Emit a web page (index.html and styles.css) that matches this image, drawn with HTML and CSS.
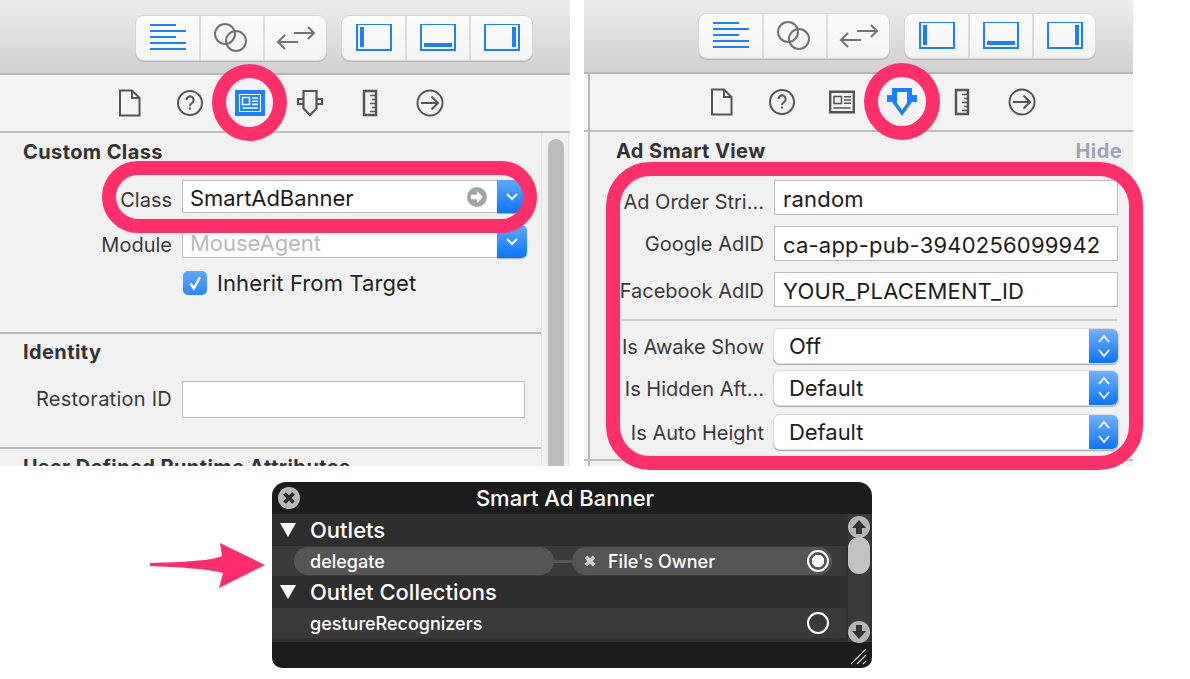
FILE: index.html
```html
<!DOCTYPE html>
<html lang="en">
<head>
<meta charset="utf-8">
<title>Smart Ad Banner</title>
<link rel="stylesheet" href="styles.css">
</head>
<body>
<svg class="defs" width="0" height="0" aria-hidden="true">
  <symbol id="i-lines" viewBox="0 0 36 28"><path d="M0 1h26M0 7h36M0 13h26M0 19h36M0 25h36" fill="none" stroke="currentColor" stroke-width="2"/></symbol>
  <symbol id="i-rings" viewBox="0 0 36 32"><g fill="none" stroke="currentColor" stroke-width="2"><circle cx="11" cy="12" r="10"/><circle cx="22" cy="19" r="10"/></g></symbol>
  <symbol id="i-swap" viewBox="0 0 40 24"><path d="M16 8H36M30 2l6 6-6 6M0 17H20M7 10l-7 7 7 7" transform="translate(2 -1)" fill="none" stroke="currentColor" stroke-width="2"/></symbol>
  <symbol id="i-pleft" viewBox="0 1 36 28"><rect x="1" y="1" width="34" height="26" fill="none" stroke="currentColor" stroke-width="2"/><rect x="4" y="4" width="4" height="20" fill="currentColor"/></symbol>
  <symbol id="i-pbottom" viewBox="0 1 36 28"><rect x="1" y="1" width="34" height="26" fill="none" stroke="currentColor" stroke-width="2"/><rect x="4" y="20" width="28" height="4" fill="currentColor"/></symbol>
  <symbol id="i-pright" viewBox="0 1 36 28"><rect x="1" y="1" width="34" height="26" fill="none" stroke="currentColor" stroke-width="2"/><rect x="28" y="4" width="4" height="20" fill="currentColor"/></symbol>
  <symbol id="i-doc" viewBox="0 0 36 36"><path d="M8 5.500H20L27.500 13V30.500H8ZM20 5.500V13H27.500" fill="none" stroke="currentColor" stroke-width="2"/></symbol>
  <symbol id="i-help" viewBox="0 0 36 36"><circle cx="18" cy="18" r="12" fill="none" stroke="currentColor" stroke-width="2"/><path d="M14.500 15a3.600 3.600 0 1 1 5.600 3c-1.500 1-2.100 1.600-2.100 3" fill="none" stroke="currentColor" stroke-width="2"/><rect x="17" y="22.500" width="2" height="2" fill="currentColor"/></symbol>
  <symbol id="i-id" viewBox="0 0 36 36"><path d="M6.200 7.700h23.600v20.600H6.200z" fill="none" stroke="currentColor" stroke-width="2.400"/><path d="M10 12.500h7.500v7H10zM20 12.800h7M20 16h7M20 19.200h7M9.500 24h17" fill="none" stroke="currentColor" stroke-width="1.500"/></symbol>
  <symbol id="i-id-on" viewBox="0 0 36 36"><rect x="3" y="5" width="30" height="26" fill="currentColor"/><path d="M7.500 9.500h21v17h-21z" fill="none" stroke="#fff" stroke-width="1.200"/><path d="M10.500 12.500h7v7h-7zM20 13h6M20 16.200h6M20 19.400h6M10.500 23h15.500" fill="none" stroke="#fff" stroke-width="1.600"/></symbol>
  <symbol id="i-attr" viewBox="0 0 36 36"><path d="M11.500 6H24.500V23.500L18 30 11.500 23.500ZM11.500 14H6V19H11.500M24.500 14H30V19H24.500" fill="none" stroke="currentColor" stroke-width="2.200"/></symbol>
  <symbol id="i-attr-on" viewBox="0 0 36 36"><path d="M8 4H28V11H33V18H28L18 32 8 18H3V11H8Z" fill="currentColor"/><path d="M13 8H23V19L18 26 13 19Z" fill="#f3f3f3"/></symbol>
  <symbol id="i-ruler" viewBox="0 0 36 36"><path d="M12 6h12v24H12z" fill="none" stroke="currentColor" stroke-width="2.500"/><path d="M18 10.500h6M20 14.500h4M18 18.500h6M20 22.500h4M18 26.500h6" fill="none" stroke="currentColor" stroke-width="1.600"/></symbol>
  <symbol id="i-next" viewBox="0 0 36 36"><circle cx="18" cy="18" r="12.500" fill="none" stroke="currentColor" stroke-width="2"/><path d="M9 18h17M19.500 11.500L26 18l-6.500 6.500" fill="none" stroke="currentColor" stroke-width="2"/></symbol>
  <symbol id="i-down" viewBox="0 0 16 10"><path d="M3 2l5 5 5-5" fill="none" stroke="currentColor" stroke-width="2"/></symbol>
  <symbol id="i-updown" viewBox="0 0 16 28"><path d="M3 10l5-6 5 6M3 18l5 6 5-6" fill="none" stroke="currentColor" stroke-width="1.800"/></symbol>
  <symbol id="i-go" viewBox="0 0 20 20"><circle cx="10" cy="10" r="10" fill="#a3a3a3"/><path d="M4 7.800h6V4l6 6-6 6v-3.800H4z" fill="#fff"/></symbol>
  <symbol id="i-check" viewBox="0 0 24 24"><path d="M7.500 12.500l3.300 5 6-11" fill="none" stroke="#fff" stroke-width="2.400"/></symbol>
</svg>

<main class="stage">
  <section class="inspector inspector-left">
    <header class="toolbar">
      <div class="seg">
        <span class="seg-cell blue"><svg class="ic-36"><use href="#i-lines"/></svg></span>
        <span class="seg-cell grey"><svg class="ic-36b"><use href="#i-rings"/></svg></span>
        <span class="seg-cell grey"><svg class="ic-40"><use href="#i-swap"/></svg></span>
      </div>
      <div class="seg">
        <span class="seg-cell blue"><svg class="ic-36"><use href="#i-pleft"/></svg></span>
        <span class="seg-cell blue"><svg class="ic-36"><use href="#i-pbottom"/></svg></span>
        <span class="seg-cell blue"><svg class="ic-36"><use href="#i-pright"/></svg></span>
      </div>
    </header>
    <nav class="tabs">
      <span class="tab"><svg class="tab-ic"><use href="#i-doc"/></svg></span>
      <span class="tab"><svg class="tab-ic"><use href="#i-help"/></svg></span>
      <span class="tab on"><svg class="tab-ic"><use href="#i-id-on"/></svg></span>
      <span class="tab"><svg class="tab-ic"><use href="#i-attr"/></svg></span>
      <span class="tab"><svg class="tab-ic"><use href="#i-ruler"/></svg></span>
      <span class="tab"><svg class="tab-ic"><use href="#i-next"/></svg></span>
    </nav>
    <div class="body">
      <div class="sections">
        <section class="sec sec-class">
          <h2 class="sec-title">Custom Class</h2>
          <div class="row row-class">
            <span class="lab">Class</span>
            <div class="combo"><span class="val">SmartAdBanner</span><svg class="go"><use href="#i-go"/></svg><span class="drop"><svg class="drop-ic"><use href="#i-down"/></svg></span></div>
          </div>
          <div class="row row-module">
            <span class="lab">Module</span>
            <div class="combo"><span class="val muted">MouseAgent</span><span class="drop"><svg class="drop-ic"><use href="#i-down"/></svg></span></div>
          </div>
          <div class="row row-check">
            <span class="lab"></span>
            <div class="check"><span class="box"><svg class="box-ic"><use href="#i-check"/></svg></span><span class="check-text">Inherit From Target</span></div>
          </div>
        </section>
        <section class="sec sec-identity">
          <h2 class="sec-title">Identity</h2>
          <div class="row row-rest">
            <span class="lab">Restoration ID</span>
            <div class="field field-rest"></div>
          </div>
        </section>
        <section class="sec sec-user">
          <h2 class="sec-title">User Defined Runtime Attributes</h2>
        </section>
      </div>
      <div class="scroll"><span class="thumb"></span></div>
    </div>
  </section>

  <section class="inspector inspector-right">
    <span class="edge"></span>
    <header class="toolbar">
      <div class="seg">
        <span class="seg-cell blue"><svg class="ic-36"><use href="#i-lines"/></svg></span>
        <span class="seg-cell grey"><svg class="ic-36b"><use href="#i-rings"/></svg></span>
        <span class="seg-cell grey"><svg class="ic-40"><use href="#i-swap"/></svg></span>
      </div>
      <div class="seg">
        <span class="seg-cell blue"><svg class="ic-36"><use href="#i-pleft"/></svg></span>
        <span class="seg-cell blue"><svg class="ic-36"><use href="#i-pbottom"/></svg></span>
        <span class="seg-cell blue"><svg class="ic-36"><use href="#i-pright"/></svg></span>
      </div>
    </header>
    <nav class="tabs">
      <span class="tab"><svg class="tab-ic"><use href="#i-doc"/></svg></span>
      <span class="tab"><svg class="tab-ic"><use href="#i-help"/></svg></span>
      <span class="tab"><svg class="tab-ic"><use href="#i-id"/></svg></span>
      <span class="tab on"><svg class="tab-ic"><use href="#i-attr-on"/></svg></span>
      <span class="tab"><svg class="tab-ic"><use href="#i-ruler"/></svg></span>
      <span class="tab"><svg class="tab-ic"><use href="#i-next"/></svg></span>
    </nav>
    <div class="adview">
      <div class="ad-head"><h2 class="sec-title">Ad Smart View</h2><span class="hide">Hide</span></div>
      <div class="ad-row ad-first"><span class="lab">Ad Order Stri...</span><div class="field">random</div></div>
      <div class="ad-row"><span class="lab">Google AdID</span><div class="field">ca-app-pub-3940256099942</div></div>
      <div class="ad-row"><span class="lab">Facebook AdID</span><div class="field">YOUR_PLACEMENT_ID</div></div>
      <hr class="ad-sep">
      <div class="ad-row sel-row"><span class="lab">Is Awake Show</span><div class="select"><span class="val">Off</span><span class="stepper"><svg class="step-ic"><use href="#i-updown"/></svg></span></div></div>
      <div class="ad-row sel-row"><span class="lab">Is Hidden Aft...</span><div class="select"><span class="val">Default</span><span class="stepper"><svg class="step-ic"><use href="#i-updown"/></svg></span></div></div>
      <div class="ad-row sel-row sel-last"><span class="lab">Is Auto Height</span><div class="select"><span class="val">Default</span><span class="stepper"><svg class="step-ic"><use href="#i-updown"/></svg></span></div></div>
    </div>
  </section>

  <span class="ring ring-tab-left"></span>
  <span class="ring ring-class"></span>
  <span class="ring ring-tab-right"></span>
  <span class="ring ring-fields"></span>

  <svg class="arrow" viewBox="0 0 120 50" aria-hidden="true">
    <path d="M2 21C35 20 62 19 74 14L72 1 117 23 71 46 75 31C60 27 30 25 2 24Z" fill="#ff2d6e"/>
  </svg>

  <section class="hud">
    <header class="hud-title">
      <span class="hud-close"><svg viewBox="0 0 22 22" class="hud-close-ic"><path d="M6.500 6.500l9 9M15.500 6.500l-9 9" stroke="#2a2a2a" stroke-width="3.800" fill="none"/></svg></span>
      <span class="hud-name">Smart Ad Banner</span>
    </header>
    <div class="hud-main">
      <div class="hud-list">
        <div class="hud-group"><span class="tri"></span>Outlets</div>
        <div class="hud-row">
          <span class="pill pill-name">delegate</span>
          <span class="wire"></span>
          <span class="pill pill-target"><svg viewBox="0 0 12 12" class="pill-x"><path d="M2.500 2.500l7 7M9.500 2.500l-7 7" stroke="#d0d0d0" stroke-width="3.200" fill="none"/></svg>File's Owner<span class="dot dot-on"></span></span>
        </div>
        <div class="hud-group"><span class="tri"></span>Outlet Collections</div>
        <div class="hud-row hud-row-plain">
          <span class="plain-name">gestureRecognizers</span>
          <span class="dot"></span>
        </div>
      </div>
      <div class="hud-scroll">
        <svg class="sb-btn" viewBox="0 0 22 22"><circle cx="11" cy="11" r="11" fill="#b5b5b5"/><path d="M11 4l7 8h-4v6H8v-6H4z" fill="#333"/></svg>
        <span class="sb-thumb"></span>
        <svg class="sb-btn sb-btn-down" viewBox="0 0 22 22"><circle cx="11" cy="11" r="11" fill="#b5b5b5"/><path d="M11 18l7-8h-4V4H8v6H4z" fill="#333"/></svg>
      </div>
    </div>
    <footer class="hud-foot">
      <svg class="grip" viewBox="0 0 18 18"><path d="M1 17L16 2M7 17L16 8M13 17L16 14" stroke="#cfcfcf" stroke-width="1.200" fill="none"/></svg>
    </footer>
  </section>
</main>
</body>
</html>
```

FILE: styles.css
```css
* { box-sizing: border-box; }
html, body { margin: 0; padding: 0; background: #fff; }
body { width: 1190px; height: 679px; overflow: hidden; font-family: Inter, "Liberation Sans", sans-serif; color: #333; }
.defs { position: absolute; }
.stage { position: relative; width: 1190px; height: 679px; }

/* inspector windows on the canvas */
.inspector { position: absolute; top: 0; height: 466px; background: #f1f1f1; overflow: hidden; display: flex; flex-direction: column; }
.inspector-left { left: 0; width: 570px; }
.inspector-right { left: 584px; width: 549px; }
.edge { position: absolute; left: 4px; top: 73px; bottom: 0; width: 2px; background: #b9b9b9; }

.toolbar { height: 75px; flex: none; display: flex; gap: 16px; padding: 16px 0 0 136px; background: linear-gradient(#ececec, #d1d1d1); border-bottom: 2px solid #b6b6b6; }
.inspector-right .toolbar { height: 74px; padding: 14px 0 0 115px; }
.seg { display: flex; width: 190px; height: 44px; border-radius: 8px; background: linear-gradient(#fbfbfb, #f3f3f3); box-shadow: 0 0 0 1px #d6d6d6, 0 1px 0 1px #b4b4b4; }
.seg-cell { width: 64px; flex: none; display: flex; align-items: center; justify-content: center; }
.seg-cell:first-child, .seg-cell:last-child { width: 63px; }
.seg-cell + .seg-cell { border-left: 2px solid #dcdcdc; }
.blue { color: #1a80ff; }
.grey { color: #727272; }
.ic-36 { width: 36px; height: 28px; }
.ic-36b { width: 36px; height: 32px; }
.ic-40 { width: 40px; height: 24px; }

.tabs { height: 58px; flex: none; display: flex; padding-left: 100px; background: #f3f3f3; border-bottom: 2px solid #bdbdbd; }
.inspector-right .tabs { padding-left: 108px; }
.tab { width: 60px; display: flex; align-items: center; justify-content: center; color: #555; }
.tab.on { color: #1a80ff; }
.tab-ic { width: 36px; height: 36px; }

.body { flex: 1; display: flex; min-height: 0; }
.sections { width: 541px; flex: none; }
.scroll { width: 28px; flex: none; padding: 6px 0 0 6px; border-left: 1px solid #e2e2e2; border-right: 1px solid #e2e2e2; }
.thumb { display: block; width: 16px; height: 400px; border-radius: 8px 8px 0 0; background: #bdbdbd; }

.sec { padding-left: 23px; border-bottom: 2px solid #b9b9b9; }
.sec-class { height: 201px; padding-top: 7px; }
.sec-identity { height: 115px; padding-top: 6px; }
.sec-user { border-bottom: 0; padding-top: 6px; }
.sec-title { margin: 0; font-size: 20px; letter-spacing: .4px; line-height: 24px; font-weight: 700; color: #333; white-space: nowrap; }

.row { display: flex; align-items: center; gap: 10px; margin-left: -23px; }
.lab { width: 172px; flex: none; text-align: right; font-size: 20px; letter-spacing: .25px; color: #3a3a3a; white-space: nowrap; }
.row-class { margin-top: 16px; height: 33px; }
.row-module { margin-top: 12px; height: 33px; }
.row-class .lab, .row-module .lab { padding-top: 6px; letter-spacing: 0; }
.row-check { margin-top: 13px; height: 24px; }
.row-rest { margin-top: 17px; height: 36px; }

.combo { position: relative; width: 345px; height: 33px; display: flex; align-items: center; background: #fff; border: 1px solid #bcbcbc; border-right: 0; border-radius: 0 6px 6px 0; }
.val { padding-left: 7px; font-size: 22px; letter-spacing: -.05px; color: #1c1c1c; }
.combo .val { padding-top: 2px; }
.muted { color: #b9b9b9; }
.go { width: 20px; height: 20px; margin-left: auto; margin-right: 10px; }
.combo .val + .drop { margin-left: auto; }
.drop { width: 30px; height: 33px; margin: -1px 0; display: flex; align-items: center; justify-content: center; color: #fff; border-radius: 0 6px 6px 0; background: linear-gradient(#5ea8ff, #0a74ff); box-shadow: 0 1px 1px #b0b0b0; }
.drop-ic { width: 16px; height: 10px; }

.check { display: flex; align-items: center; gap: 10px; margin-left: 1px; }
.box { width: 24px; height: 24px; border-radius: 5px; background: linear-gradient(#5ea8ff, #2a87ff); display: block; }
.box-ic { display: block; width: 24px; height: 24px; }
.check-text { font-size: 22px; letter-spacing: .1px; line-height: 22px; color: #222; white-space: nowrap; }

.field { flex: none; height: 35px; width: 344px; background: #fff; border: 1px solid #bcbcbc; padding: 2px 0 0 8px; font-size: 22px; line-height: 33px; letter-spacing: .2px; color: #1c1c1c; white-space: nowrap; overflow: hidden; }
.field-rest { width: 343px; height: 37px; }

/* right panel form */
.adview { padding-left: 5px; height: 329px; flex: none; border-bottom: 2px solid #bdbdbd; }
.ad-head { display: flex; justify-content: space-between; padding: 7px 11px 0 27px; height: 48px; }
.hide { font-size: 20px; letter-spacing: .4px; line-height: 24px; font-weight: 700; color: #9aa7b5; }
.ad-row { display: flex; align-items: center; gap: 10px; height: 35px; margin-bottom: 11px; }
.ad-row .lab { width: 175px; letter-spacing: 0; }
.ad-first .lab { padding-top: 8px; }
.ad-row:nth-child(4) .lab { padding-top: 2px; }
.ad-sep { margin: 12px 0 8px 32px; width: 496px; height: 2px; border: 0; background: #cfcfcf; }
.sel-row { height: 34px; margin-bottom: 8px; }
.sel-row .lab { padding-top: 2px; }
.sel-last { margin-top: 10px; }
.select { width: 344px; height: 34px; display: flex; align-items: center; justify-content: space-between; background: #fff; border-radius: 6px; box-shadow: 0 0 0 1px #dcdcdc, 0 1px 1px 1px #a8a8a8; }
.select .val { padding-left: 15px; }
.stepper { width: 29px; height: 34px; display: flex; align-items: center; justify-content: center; color: #fff; border-radius: 0 6px 6px 0; background: linear-gradient(#72b1ff, #0a74ff); }
.step-ic { width: 16px; height: 28px; }

/* pink callouts */
.ring { position: absolute; border: 14px solid #ff2f6c; }
.ring-tab-left { left: 212px; top: 64px; width: 75px; height: 77px; border-radius: 50%; }
.ring-tab-right { left: 864px; top: 63px; width: 76px; height: 77px; border-radius: 50%; }
.ring-class { left: 102px; top: 161px; width: 435px; height: 72px; border-radius: 36px; }
.ring-fields { left: 606px; top: 162px; width: 537px; height: 308px; border-radius: 44px; }
.arrow { position: absolute; left: 148px; top: 542px; width: 120px; height: 50px; }

/* connections HUD */
.hud { position: absolute; left: 272px; top: 482px; width: 600px; height: 186px; border-radius: 14px 14px 10px 10px; background: #1c1c1c; overflow: hidden; color: #fff; display: flex; flex-direction: column; }
.hud-title { position: relative; height: 32px; flex: none; display: flex; align-items: center; justify-content: center; padding-right: 14px; }
.hud-name { font-size: 22px; font-weight: 500; color: #fff; }
.hud-close { position: absolute; left: 6px; top: 5px; width: 22px; height: 22px; border-radius: 50%; background: #b9b9b9; }
.hud-close-ic { display: block; width: 22px; height: 22px; }
.hud-main { height: 128px; flex: none; display: flex; background: #303030; }
.hud-list { width: 574px; flex: none; }
.hud-group { height: 32px; display: flex; align-items: center; gap: 14px; padding-left: 8px; font-size: 22px; font-weight: 500; background: #2e2e2e; }
.tri { width: 16px; height: 14px; background: #fff; clip-path: polygon(0 0, 100% 0, 50% 100%); }
.hud-row { position: relative; height: 30px; display: flex; align-items: center; padding-left: 22px; background: #3a3a3a; font-size: 18px; font-weight: 500; }
.pill { height: 28px; display: flex; align-items: center; background: #555; }
.pill-name { width: 260px; padding-left: 16px; border-radius: 14px; }
.wire { width: 18px; height: 3px; background: #555; }
.pill-target { width: 260px; padding-left: 11px; gap: 11px; border-radius: 14px; position: relative; }
.pill-x { width: 14px; height: 14px; }
.dot { width: 22px; height: 22px; border-radius: 50%; border: 2px solid #fff; display: block; }
.dot-on { position: absolute; right: 3px; top: 3px; background: radial-gradient(circle, #fff 0 6px, transparent 6.500px); }
.hud-row-plain { justify-content: space-between; padding-left: 38px; padding-right: 17px; }
.hud-scroll { width: 22px; margin-left: 2px; flex: none; display: flex; flex-direction: column; background: #3a3a3a; padding-top: 2px; }
.sb-btn { display: block; width: 22px; height: 22px; flex: none; }
.sb-btn-down { margin-top: auto; margin-bottom: -1px; }
.sb-thumb { display: block; width: 22px; height: 37px; margin-top: -1px; border-radius: 11px; background: #c2c2c2; }
.hud-foot { flex: 1; display: flex; justify-content: flex-end; align-items: flex-end; padding: 0 4px 3px 0; }
.grip { width: 18px; height: 18px; display: block; }
```
